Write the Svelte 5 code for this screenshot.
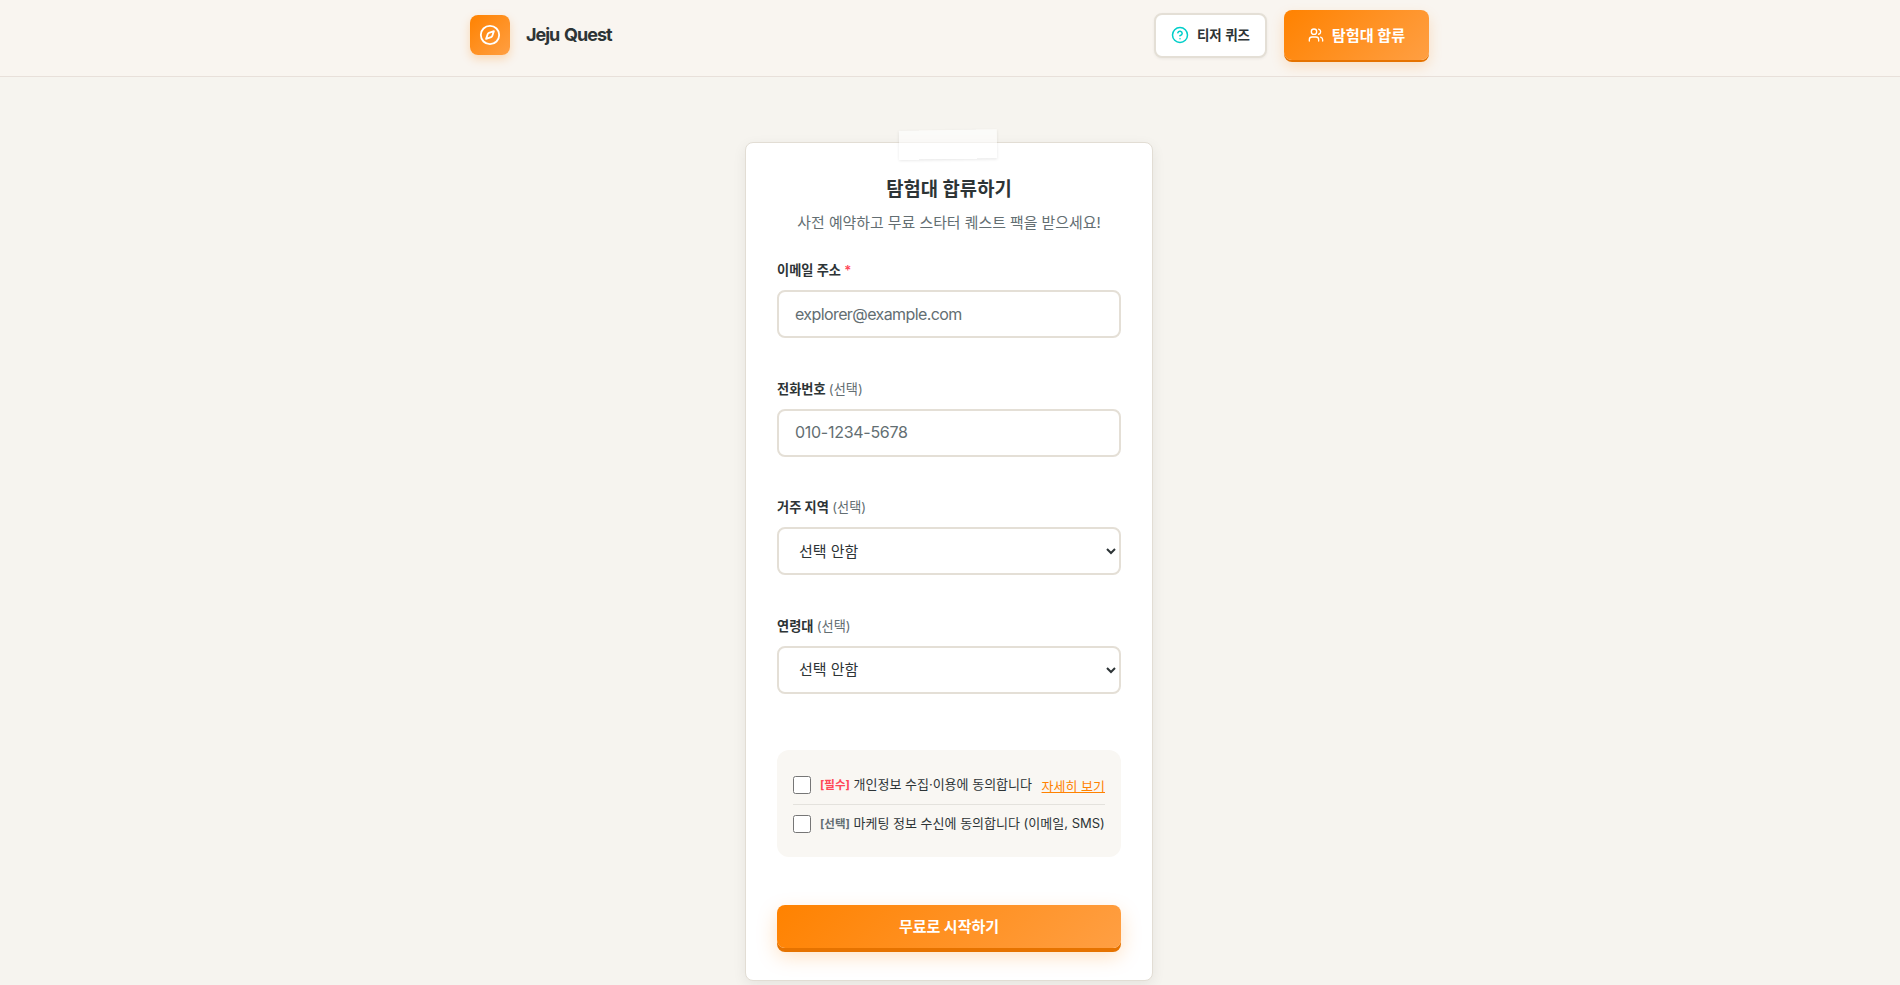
<script>
  const fields = [
    { label: '전화번호', type: 'input', placeholder: '010-1234-5678' },
    { label: '거주 지역', type: 'select' },
    { label: '연령대', type: 'select' }
  ];
</script>

<div class="page">
  <header class="header">
    <div class="header-inner">
      <div class="brand">
        <div class="logo">
          <svg width="22" height="22" viewBox="0 0 24 24" fill="none" stroke="#fff" stroke-width="2" stroke-linecap="round" stroke-linejoin="round">
            <circle cx="12" cy="12" r="10" />
            <path d="m16.24 7.76-1.804 5.411a2 2 0 0 1-1.265 1.265L7.76 16.24l1.804-5.411a2 2 0 0 1 1.265-1.265z" />
          </svg>
        </div>
        <span class="brand-name">Jeju Quest</span>
      </div>
      <div class="actions">
        <button class="btn-quiz">
          <svg width="18" height="18" viewBox="0 0 24 24" fill="none" stroke="#00cec9" stroke-width="2" stroke-linecap="round" stroke-linejoin="round">
            <circle cx="12" cy="12" r="10" />
            <path d="M9.09 9a3 3 0 0 1 5.83 1c0 2-3 3-3 3" />
            <path d="M12 17h.01" />
          </svg>
          <span class="btn-text">티저 퀴즈</span>
        </button>
        <button class="btn-join">
          <svg width="16" height="16" viewBox="0 0 24 24" fill="none" stroke="#fff" stroke-width="2" stroke-linecap="round" stroke-linejoin="round">
            <path d="M16 21v-2a4 4 0 0 0-4-4H6a4 4 0 0 0-4 4v2" />
            <circle cx="9" cy="7" r="4" />
            <path d="M22 21v-2a4 4 0 0 0-3-3.87" />
            <path d="M16 3.13a4 4 0 0 1 0 7.75" />
          </svg>
          <span class="btn-text">탐험대 합류</span>
        </button>
      </div>
    </div>
  </header>

  <main class="main">
    <section class="card">
      <div class="tape"></div>
      <h1 class="title">탐험대 합류하기</h1>
      <p class="subtitle">사전 예약하고 무료 스타터 퀘스트 팩을 받으세요!</p>

      <form class="form" onsubmit={(e) => e.preventDefault()}>
        <div class="field">
          <label class="label" for="email">이메일 주소 <span class="req">*</span></label>
          <input id="email" class="control email" type="email" placeholder="explorer@example.com" />
        </div>

        {#each fields as f, i}
          <div class="field">
            <label class="label" for={'f' + i}>{f.label} <span class="opt">(선택)</span></label>
            {#if f.type === 'input'}
              <input id={'f' + i} class="control tel" type="tel" placeholder={f.placeholder} />
            {:else}
              <select id={'f' + i} class="control select">
                <option>선택 안함</option>
              </select>
            {/if}
          </div>
        {/each}

        <div class="consent">
          <div class="consent-row first">
            <input type="checkbox" class="check" id="c1" />
            <label for="c1" class="consent-text"><span class="tag-req">[필수]</span> 개인정보 수집·이용에 동의합니다</label>
            <a href="#terms" class="more">자세히 보기</a>
          </div>
          <div class="consent-row">
            <input type="checkbox" class="check" id="c2" />
            <label for="c2" class="consent-text"><span class="tag-opt">[선택]</span> 마케팅 정보 수신에 동의합니다 (이메일, SMS)</label>
          </div>
        </div>

        <button class="submit" type="submit">무료로 시작하기</button>
      </form>
    </section>
  </main>
</div>

<style>
  :global(body) {
    margin: 0;
    background: #f6f4ef;
    overflow: hidden;
  }
  .page {
    min-height: 985px;
    font-family: Inter, "Noto Sans CJK KR", sans-serif;
    color: #2d3436;
  }
  .header {
    height: 76px;
    box-sizing: content-box;
    background: #f9f5f0;
    border-bottom: 1px solid #e8e0da;
  }
  .header-inner {
    width: 960px;
    height: 70px;
    margin: 0 auto;
    display: flex;
    align-items: center;
    justify-content: space-between;
  }
  .brand {
    display: flex;
    align-items: center;
    gap: 16px;
  }
  .logo {
    width: 40px;
    height: 40px;
    border-radius: 8px;
    background: linear-gradient(135deg, #ff8200, #ff9f43);
    box-shadow: 0 4px 10px rgba(255, 130, 0, 0.25);
    display: flex;
    align-items: center;
    justify-content: center;
  }
  .brand-name {
    font-size: 18px;
    font-weight: 700;
    letter-spacing: -1px;
    word-spacing: 1.5px;
    margin-top: -2px;
  }
  .actions {
    display: flex;
    align-items: center;
    gap: 17px;
    margin-right: 1px;
  }
  button {
    font-family: inherit;
    cursor: pointer;
  }
  .btn-text {
    margin-top: -2px;
  }
  .btn-quiz {
    width: 113px;
    height: 45px;
    box-sizing: border-box;
    display: flex;
    align-items: center;
    justify-content: center;
    gap: 8px;
    background: #fff;
    border: 2px solid #e4dfd6;
    border-radius: 8px;
    font-size: 13.5px;
    font-weight: 600;
    color: #2d3436;
    padding: 0;
    box-shadow: 0 1px 3px rgba(0, 0, 0, 0.06);
  }
  .btn-join {
    width: 145px;
    height: 50px;
    box-sizing: border-box;
    display: flex;
    align-items: center;
    justify-content: center;
    gap: 8px;
    border: none;
    border-radius: 8px;
    background: linear-gradient(135deg, #ff8200, #ff9f43);
    box-shadow: 0 2px 0 #e67300, 0 6px 14px rgba(255, 130, 0, 0.2);
    color: #fff;
    font-size: 15.2px;
    font-weight: 700;
    padding: 0;
  }
  .main {
    display: flex;
    justify-content: center;
    padding-top: 65px;
  }
  .card {
    position: relative;
    width: 408px;
    box-sizing: border-box;
    padding: 33px 31px 32px;
    background: #fff;
    border: 1px solid #e2ddd4;
    border-radius: 8px;
    box-shadow: 0 4px 14px rgba(0, 0, 0, 0.07);
    margin-left: -2px;
  }
  .tape {
    position: absolute;
    top: -13px;
    left: 153px;
    width: 98px;
    height: 29px;
    background: rgba(255, 255, 255, 0.6);
    box-shadow: 0 1px 3px rgba(0, 0, 0, 0.1);
    transform: rotate(-1deg);
  }
  .title {
    margin: 0;
    text-align: center;
    font-size: 18.8px;
    line-height: 28px;
    font-weight: 700;
    color: #2d3436;
  }
  .subtitle {
    margin: 7px 0 0;
    text-align: center;
    font-size: 14.9px;
    line-height: 24px;
    color: #636e72;
  }
  .form {
    margin-top: 25px;
    display: flex;
    flex-direction: column;
  }
  .field {
    margin-bottom: 40.5px;
  }
  .label {
    display: block;
    font-size: 13.2px;
    line-height: 20px;
    font-weight: 600;
    color: #2d3436;
    margin-bottom: 10px;
  }
  .req {
    color: #ff4757;
  }
  .opt {
    font-weight: 400;
    color: #636e72;
  }
  .control {
    display: block;
    width: 100%;
    height: 48px;
    box-sizing: border-box;
    border: 2px solid #e4dfd6;
    border-radius: 8px;
    background: #fff;
    padding: 0 16px;
    font-family: inherit;
    font-size: 16px;
    color: #2d3436;
    outline: none;
  }
  .control::placeholder {
    color: #636e72;
    opacity: 1;
  }
  .email {
    letter-spacing: -0.6px;
  }
  .tel {
    letter-spacing: -0.28px;
    padding-bottom: 2px;
  }
  .select {
    font-size: 15px;
  }
  .consent {
    margin-top: 16px;
    background: #f9f7f3;
    border-radius: 12px;
    padding: 16px 16px 14px;
  }
  .consent-row {
    display: flex;
    align-items: center;
    gap: 9px;
    min-height: 38px;
    font-size: 13px;
    color: #2d3436;
  }
  .consent-row.first {
    border-bottom: 1px solid #e4e2dd;
  }
  .check {
    width: 18px;
    height: 18px;
    margin: 0;
    flex: none;
  }
  .consent-text {
    white-space: nowrap;
    margin-top: -4px;
  }
  .tag-req {
    font-size: 11.5px;
    font-weight: 700;
    color: #ff4757;
  }
  .tag-opt {
    font-size: 11.5px;
    font-weight: 700;
    color: #636e72;
  }
  .more {
    margin-left: auto;
    font-size: 13px;
    color: #ff8200;
    text-decoration: underline;
  }
  .submit {
    margin-top: 48px;
    height: 43px;
    padding: 0 0 2px;
    border: none;
    border-radius: 8px;
    background: linear-gradient(135deg, #ff8200, #ff9f43);
    box-shadow: 0 4px 0 #e67300, 0 8px 20px rgba(255, 130, 0, 0.25);
    color: #fff;
    font-size: 15px;
    font-weight: 700;
  }
</style>
